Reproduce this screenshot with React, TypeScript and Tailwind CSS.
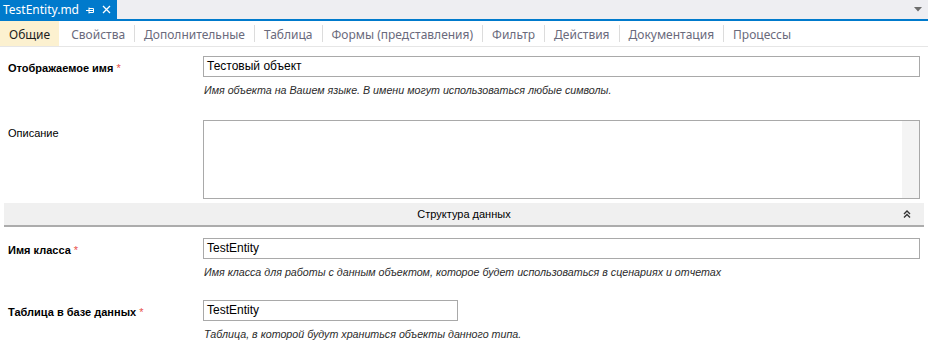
import React from 'react';

const tabs = ['Общие', 'Свойства', 'Дополнительные', 'Таблица', 'Формы (представления)', 'Фильтр', 'Действия', 'Документация', 'Процессы'];

function Req() {
  return <span className="text-[#e8524a] ml-[3px] font-normal">*</span>;
}

function Field({ label, required, value, hint, inputClass }: { label: string; required?: boolean; value: string; hint: string; inputClass?: string }) {
  return (
    <div className="flex">
      <div className="w-[203px] pl-2 pt-[4px] font-bold text-[11px] text-black">
        {label}
        {required && <Req />}
      </div>
      <div className="flex-1 pr-[8px]">
        <div className={`h-[21px] border border-[#a9a9a9] bg-white pl-[3px] text-[12px] leading-[19px] text-black ${inputClass ?? ''}`}>{value}</div>
        <div className="pl-[1px] pt-[5px] text-[10.7px] italic text-[#2b2b2b]">{hint}</div>
      </div>
    </div>
  );
}

export default function App() {
  return (
    <div className="w-[928px] h-[344px] bg-white overflow-hidden" style={{ fontFamily: '"Liberation Sans", Arial, sans-serif' }}>
      {/* document tab strip */}
      <div className="h-[19px] bg-[#eeeef2] flex items-stretch justify-between">
        <div className="w-[117px] bg-[#007acc] flex items-center pl-[3px] text-white text-[12px]" style={{ fontFamily: '"Noto Sans", sans-serif' }}>
          <span className="leading-none">TestEntity.md</span>
          <svg className="ml-[6px]" width="10" height="10" viewBox="0 0 10 10" fill="none" stroke="white" strokeWidth="1">
            <path d="M1 5.5h3M4 2.5v6M4 3.5h4.5v4H4M4 5.5h4.5" />
          </svg>
          <svg className="ml-[7px]" width="9" height="9" viewBox="0 0 9 9" stroke="white" strokeWidth="1.3">
            <path d="M1 1l7 7M8 1l-7 7" />
          </svg>
        </div>
        <div className="flex items-center pr-[6px]">
          <svg width="8" height="5" viewBox="0 0 8 5"><path d="M0 0h8L4 4.5z" fill="#6d6d6d" /></svg>
        </div>
      </div>
      <div className="h-[2px] bg-[#007acc]" />

      {/* property tabs */}
      <div className="h-[26px] flex items-center border-b border-[#e6e6e6] text-[12px]" style={{ fontFamily: '"Noto Sans", sans-serif' }}>
        {tabs.map((t, i) => (
          <React.Fragment key={t}>
            {i > 1 && <div className="w-px h-[17px] bg-[#dcdcdc]" />}
            <div className={i === 0 ? 'h-full flex items-center pt-[2px] px-[9px] mr-[3px] bg-[#fcf1d0] text-[#1e1e1e]' : 'h-full flex items-center pt-[2px] px-[9px] text-[#6a6a7c]'}>
              {t}
            </div>
          </React.Fragment>
        ))}
      </div>

      <div className="pt-[9px]">
        <Field label="Отображаемое имя" required value="Тестовый объект" hint="Имя объекта на Вашем языке. В имени могут использоваться любые символы." />

        <div className="flex mt-[22px]">
          <div className="w-[203px] pl-2 pt-[5px] text-[11px] text-black">Описание</div>
          <div className="flex-1 pr-[8px]">
            <div className="h-[79px] border border-[#a9a9a9] bg-white flex justify-end">
              <div className="w-[17px] bg-[#f4f4f4]" />
            </div>
          </div>
        </div>

        <div className="mx-[4px] mt-[4px] h-[24px] bg-[#f0f0f0] border-b-2 border-[#acacac] flex items-center relative">
          <div className="flex-1 text-center text-[11px] text-black">Структура данных</div>
          <svg className="absolute right-[13px] top-[7px]" width="8" height="8" viewBox="0 0 8 8" fill="none" stroke="#333" strokeWidth="1.4">
            <path d="M1 4l3-3 3 3M1 7.5l3-3 3 3" />
          </svg>
        </div>

        <div className="mt-[11px]">
          <Field label="Имя класса" required value="TestEntity" hint="Имя класса для работы с данным объектом, которое будет использоваться в сценариях и отчетах" />
        </div>
        <div className="mt-[20px]">
          <Field label="Таблица в базе данных" required value="TestEntity" inputClass="w-[255px]" hint="Таблица, в которой будут храниться объекты данного типа." />
        </div>
      </div>
    </div>
  );
}
